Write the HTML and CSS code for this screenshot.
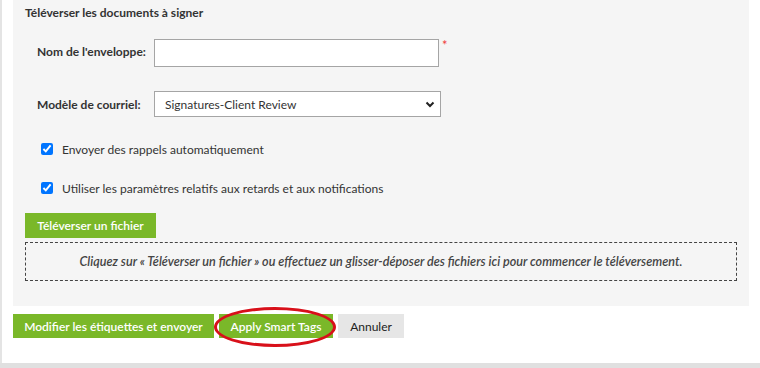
FILE: index.html
```html
<!DOCTYPE html>
<html lang="fr">
<head>
    <meta charset="UTF-8">
    <meta name="viewport" content="width=device-width, initial-scale=1.0">
    <title>Téléverser les documents</title>
    <link rel="stylesheet" href="styles.css">
</head>
<body>
    <div class="frame">
        <div class="panel">
            <h3 class="title">Téléverser les documents à signer</h3>
            <div class="field field-name">
                <label for="envelope-name">Nom de l'enveloppe:</label>
                <input type="text" id="envelope-name">
                <span class="required">*</span>
            </div>
            <div class="field field-template">
                <label for="email-template">Modèle de courriel:</label>
                <span class="select-wrap">
                    <select id="email-template">
                        <option>Signatures-Client Review</option>
                    </select>
                    <svg class="chevron" width="10" height="7" viewBox="0 0 10 7"><path d="M1.5 1.5 L5 5 L8.5 1.5" fill="none" stroke="#222" stroke-width="2"/></svg>
                </span>
            </div>
            <label class="check check-first">
                <input type="checkbox" checked>
                <span>Envoyer des rappels automatiquement</span>
            </label>
            <label class="check check-second">
                <input type="checkbox" checked>
                <span>Utiliser les paramètres relatifs aux retards et aux notifications</span>
            </label>
            <button class="btn btn-green upload-btn">Téléverser un fichier</button>
            <div class="dropzone">
                Cliquez sur « Téléverser un fichier » ou effectuez un glisser-déposer des fichiers ici pour commencer le téléversement.
            </div>
        </div>
        <div class="actions">
            <button class="btn btn-green btn-send">Modifier les étiquettes et envoyer</button>
            <span class="highlight">
                <button class="btn btn-green btn-tags">Apply Smart Tags</button>
                <span class="ring"></span>
            </span>
            <button class="btn btn-gray btn-cancel">Annuler</button>
        </div>
    </div>
    <div class="bottom-bar"></div>
</body>
</html>
```

FILE: styles.css
```css
body {
    margin: 0;
    font-family: Lato, "Open Sans", sans-serif;
    font-size: 12px;
    color: #333;
    background: #fff;
    height: 368px;
    display: flex;
    flex-direction: column;
    overflow: hidden;
}
.frame {
    flex: 1;
    border-left: 2px solid #e4e4e4;
    padding: 0 11px;
}
.panel {
    background: #f5f5f5;
    padding: 5px 12px 25px 12px;
}
.title {
    margin: 0;
    font-size: 12px;
    font-weight: bold;
    line-height: 16px;
}
.field {
    display: flex;
    align-items: center;
    padding-left: 12px;
}
.field label {
    flex-shrink: 0;
    width: 117px;
    white-space: nowrap;
    font-weight: bold;
}
.field-name {
    margin-top: 18px;
    align-items: flex-start;
}
.field-name label {
    line-height: 26px;
}
.field-name input {
    width: 285px;
    height: 28px;
    box-sizing: border-box;
    border: 1px solid #a5a5a5;
    background: #fff;
    margin: 0;
}
.required {
    color: #f03a3a;
    margin-left: 3px;
    font-size: 13px;
    line-height: 12px;
}
.field-template {
    margin-top: 24px;
}
.select-wrap {
    position: relative;
    display: inline-block;
}
.select-wrap select {
    display: block;
    appearance: none;
    width: 287px;
    height: 26px;
    border: 1px solid #a5a5a5;
    background: #fff;
    font-family: inherit;
    font-size: 12px;
    color: #333;
    padding: 0 10px;
    margin: 0;
}
.chevron {
    position: absolute;
    right: 6px;
    top: 10px;
}
.check {
    display: flex;
    align-items: center;
    height: 20px;
    padding-left: 16px;
}
.check input {
    margin: 0 9px 0 0;
    width: 12px;
    height: 12px;
}
.check-first {
    margin-top: 22px;
}
.check-second {
    margin-top: 19px;
}
.btn {
    border: none;
    font-family: inherit;
    font-size: 12px;
    font-weight: 600;
    height: 24px;
    padding: 0;
    cursor: pointer;
}
.btn-green {
    background: #7ab829;
    color: #fff;
}
.btn-gray {
    background: #e6e6e6;
    color: #222;
    font-weight: normal;
}
.upload-btn {
    display: block;
    margin-top: 15px;
    height: 25px;
    width: 131px;
}
.dropzone {
    margin-top: 4px;
    height: 39px;
    box-sizing: border-box;
    border: 1px dashed #444;
    display: flex;
    align-items: center;
    justify-content: center;
    font-size: 12.6px;
    font-style: italic;
    font-weight: 600;
    color: #444;
}
.actions {
    display: flex;
    gap: 5px;
    margin-top: 8px;
}
.btn-send {
    width: 201px;
}
.btn-tags {
    width: 114px;
}
.btn-cancel {
    width: 66px;
}
.highlight {
    position: relative;
    display: inline-block;
    height: 24px;
}
.ring {
    position: absolute;
    left: -5px;
    top: -7px;
    width: 122px;
    height: 40px;
    box-sizing: border-box;
    border: 3px solid #d8101a;
    border-radius: 50%;
}
.bottom-bar {
    height: 5px;
    background: #e0e0e0;
}
```
